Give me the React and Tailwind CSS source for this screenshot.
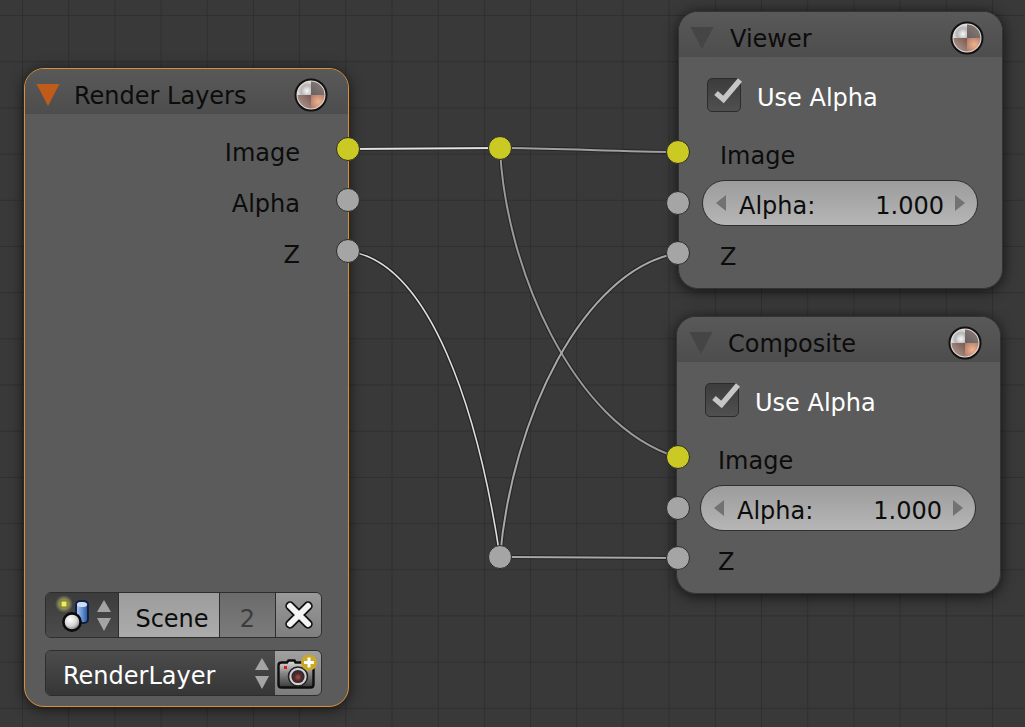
import React from "react";

const FONT = "font-['DejaVu_Sans',sans-serif]";

function Socket({ kind = "gray", className = "" }) {
  const c = kind === "yellow" ? "bg-[#cbc923]" : "bg-[#a5a5a5]";
  return (
    <span
      className={`absolute w-[24px] h-[24px] rounded-full border border-[#2a2a2a] ${c} ${className}`}
    />
  );
}

function Sphere() {
  return (
    <svg width="34" height="34" viewBox="0 0 34 34" className="shrink-0 blur-[0.4px]">
      <defs>
        <radialGradient id="sTL" cx="0.7" cy="0.7" r="0.8">
          <stop offset="0" stopColor="#f6f6f6" />
          <stop offset="0.55" stopColor="#b4b4b4" />
          <stop offset="1" stopColor="#efefef" />
        </radialGradient>
        <linearGradient id="sTR" x1="0" y1="1" x2="1" y2="0">
          <stop offset="0" stopColor="#65605e" />
          <stop offset="1" stopColor="#8f7f7b" />
        </linearGradient>
        <linearGradient id="sBL" x1="1" y1="0" x2="0" y2="1">
          <stop offset="0" stopColor="#77594f" />
          <stop offset="1" stopColor="#b7a29b" />
        </linearGradient>
        <radialGradient id="sBR" cx="0.55" cy="0.5" r="0.7">
          <stop offset="0" stopColor="#efb48c" />
          <stop offset="1" stopColor="#b07a6e" />
        </radialGradient>
      </defs>
      <circle cx="17" cy="17" r="15.5" fill="#e4dcd9" stroke="#111" strokeWidth="2" />
      <path d="M17 17V3.5A13.5 13.5 0 0 0 3.5 17Z" fill="url(#sTL)" />
      <path d="M17 17V3.5A13.5 13.5 0 0 1 30.5 17Z" fill="url(#sTR)" />
      <path d="M17 17H3.5A13.5 13.5 0 0 0 17 30.5Z" fill="url(#sBL)" />
      <path d="M17 17H30.5A13.5 13.5 0 0 1 17 30.5Z" fill="url(#sBR)" />
    </svg>
  );
}

function Triangle({ color }) {
  return (
    <svg width="24" height="24" viewBox="0 0 24 24" className="shrink-0">
      <path d="M0.5 1H23.5L12 23Z" fill={color} />
    </svg>
  );
}

function Header({ title, tri, pl, gap, pr }) {
  return (
    <div
      className={`h-[45px] shrink-0 flex items-center pt-[6px] ${pl} ${pr} rounded-t-[19px] bg-gradient-to-b from-[#595959] to-[#4d4d4d]`}
    >
      <Triangle color={tri} />
      <span className={`${gap} flex-1 text-[24px] leading-none text-[#0c0c0c] pt-[2px]`}>{title}</span>
      <Sphere />
    </div>
  );
}

function Check() {
  return (
    <span className="relative block w-[34px] h-[34px] shrink-0 rounded-[5px] border border-[#2b2b2b] bg-gradient-to-b from-[#3c3c3c] to-[#505050]">
      <svg width="32" height="36" viewBox="0 0 32 36" className="absolute left-[6px] top-[-6px]">
        <path d="M2 20L9.5 26.5L26 7" fill="none" stroke="#c6c6c6" strokeWidth="5.4" strokeLinejoin="miter" />
      </svg>
    </span>
  );
}

function OutputNode({ title, className, socketLeft, pl, gap }) {
  return (
    <div
      className={`absolute w-[325px] h-[278px] flex flex-col rounded-[20px] bg-[#5f5f5f]/90 border border-[#333] shadow-[0_2px_14px_rgba(0,0,0,0.7)] ${className}`}
    >
      <Header title={title} tri="#454545" pl={pl} gap={gap} pr="pr-[18px]" />
      <div className="flex items-start pl-[28px] mt-[21px] h-[35px]">
        <Check />
        <span className="ml-[16px] h-[35px] flex items-center pt-[4px] text-[24px] leading-none text-white">Use Alpha</span>
      </div>
      <div className="pl-[41px] mt-[23px] h-[40px] flex items-center text-[24px] leading-none text-[#0c0c0c]">Image</div>
      <div className="ml-[23px] mt-[4px] w-[276px] h-[46px] rounded-[23px] border border-[#2f2f2f] bg-gradient-to-b from-[#9c9c9c] to-[#b6b6b6] flex items-center text-[24px] leading-none text-[#0c0c0c] pl-[13px] pr-[12px]">
        <svg width="10" height="16" viewBox="0 0 10 16" className="shrink-0"><path d="M10 0V16L0 8Z" fill="#727272" /></svg>
        <span className="ml-[13px] flex-1 pt-[5px]">Alpha:</span>
        <span className="pt-[5px]">1.000</span>
        <svg width="10" height="16" viewBox="0 0 10 16" className="shrink-0 ml-[11px]"><path d="M0 0V16L10 8Z" fill="#727272" /></svg>
      </div>
      <div className="pl-[41px] mt-[11px] h-[40px] flex items-center text-[24px] leading-none text-[#0c0c0c]">Z</div>
      <Socket kind="yellow" className={`${socketLeft} top-[128px]`} />
      <Socket className={`${socketLeft} top-[179px]`} />
      <Socket className={`${socketLeft} top-[229px]`} />
    </div>
  );
}

function SceneIcon() {
  return (
    <svg width="40" height="40" viewBox="0 0 40 40" className="shrink-0">
      <defs>
        <radialGradient id="glow">
          <stop offset="0" stopColor="#f2f06a" stopOpacity="0.9" />
          <stop offset="0.55" stopColor="#c6c46a" stopOpacity="0.55" />
          <stop offset="1" stopColor="#c6c46a" stopOpacity="0" />
        </radialGradient>
        <linearGradient id="cyl" x1="0" y1="0" x2="1" y2="0">
          <stop offset="0" stopColor="#b9cfee" />
          <stop offset="0.55" stopColor="#5f8fd2" />
          <stop offset="1" stopColor="#274f96" />
        </linearGradient>
        <radialGradient id="ball" cx="0.4" cy="0.35" r="0.7">
          <stop offset="0" stopColor="#ffffff" />
          <stop offset="0.55" stopColor="#d4d4d4" />
          <stop offset="1" stopColor="#6a6a6a" />
        </radialGradient>
      </defs>
      <circle cx="10" cy="9" r="9" fill="url(#glow)" />
      <rect x="7" y="6" width="6" height="6" fill="#f0ee60" stroke="#77762a" strokeWidth="1" />
      <rect x="22" y="6" width="12" height="22" rx="4" fill="url(#cyl)" stroke="#12213f" strokeWidth="2" />
      <ellipse cx="28" cy="9.5" rx="5" ry="2.6" fill="#cfdef2" />
      <circle cx="18" cy="27" r="8.6" fill="url(#ball)" stroke="#0b0b0b" strokeWidth="2.6" />
    </svg>
  );
}

function UpDown() {
  return (
    <svg width="14" height="31" viewBox="0 0 14 31" className="shrink-0">
      <path d="M7 0L14 12H0Z" fill="#a4a4a4" />
      <path d="M0 18H14L7 31Z" fill="#a4a4a4" />
    </svg>
  );
}

function CloseIcon() {
  return (
    <svg width="30" height="30" viewBox="0 0 30 30">
      <path d="M6 6L24 24M24 6L6 24" stroke="#111" strokeWidth="9.5" strokeLinecap="round" />
      <path d="M6 6L24 24M24 6L6 24" stroke="#f4f4f4" strokeWidth="6" strokeLinecap="round" />
    </svg>
  );
}

function CameraIcon() {
  return (
    <svg width="44" height="38" viewBox="0 0 44 38">
      <defs>
        <linearGradient id="cam" x1="0" y1="0" x2="0" y2="1">
          <stop offset="0" stopColor="#e0e0e0" />
          <stop offset="0.45" stopColor="#8a8a8a" />
          <stop offset="1" stopColor="#3a3a3a" />
        </linearGradient>
        <radialGradient id="lens" cx="0.5" cy="0.55" r="0.55">
          <stop offset="0" stopColor="#a8553f" />
          <stop offset="0.5" stopColor="#54282a" />
          <stop offset="1" stopColor="#1f2a3c" />
        </radialGradient>
      </defs>
      <path d="M5 8.5h6l1.5-2h6l1 2h15q3 0 3 3v19q0 3-3 3h-29q-3 0-3-3v-19q0-3 3-3Z" fill="url(#cam)" stroke="#0e0e0e" strokeWidth="2.4" />
      <rect x="8" y="12" width="3" height="3" fill="#e01818" />
      <circle cx="22" cy="22.5" r="9.5" fill="#d0d0d0" stroke="#222" strokeWidth="1.6" />
      <circle cx="22" cy="22.5" r="6.6" fill="url(#lens)" />
      <circle cx="33" cy="8.5" r="8" fill="#c9a727" />
      <path d="M33 3.5v10M28 8.5h10" stroke="#fff" strokeWidth="3" />
    </svg>
  );
}

function RenderLayers() {
  return (
    <div className="absolute left-[24px] top-[68px] w-[325px] h-[639px] flex flex-col rounded-[20px] bg-[#5f5f5f]/90 border border-[#d98f33] shadow-[0_2px_14px_rgba(0,0,0,0.65)]">
      <Header title="Render Layers" tri="#c15b1a" pl="pl-[11px]" pr="pr-[20px]" gap="ml-[14px]" />
      <div className="flex flex-col items-end pr-[48px] text-[24px] leading-none text-[#0c0c0c] mt-[13px]">
        <div className="h-[51px] flex items-center">Image</div>
        <div className="h-[51px] flex items-center">Alpha</div>
        <div className="h-[51px] flex items-center">Z</div>
      </div>
      <div className="flex-1" />
      <div className="flex flex-col gap-[12px] px-[20px] pb-[10px] text-[24px] leading-none">
        <div className="flex h-[46px] w-[277px] rounded-[6px] border border-[#2d2d2d] overflow-hidden">
          <div className="w-[72px] shrink-0 flex items-center pl-[8px] gap-[3px] bg-gradient-to-b from-[#3c3c3c] to-[#4c4c4c]">
            <SceneIcon />
            <UpDown />
          </div>
          <div className="w-[101px] shrink-0 flex items-center justify-center pl-[6px] pt-[7px] border-l border-[#2d2d2d] bg-gradient-to-b from-[#9c9c9c] to-[#acacac] text-[#0c0c0c]">Scene</div>
          <div className="w-[56px] shrink-0 flex items-center justify-center pt-[7px] border-l border-[#2d2d2d] bg-gradient-to-b from-[#6b6b6b] to-[#7b7b7b] text-[#3c3c3c]">2</div>
          <div className="flex-1 flex items-center justify-center border-l border-[#2d2d2d] bg-gradient-to-b from-[#9a9a9a] to-[#7f7f7f]">
            <CloseIcon />
          </div>
        </div>
        <div className="flex h-[46px] w-[277px] rounded-[6px] border border-[#2d2d2d] overflow-hidden">
          <div className="w-[229px] shrink-0 flex items-center pl-[17px] pr-[6px] bg-gradient-to-b from-[#4c4c4c] to-[#363636] text-white">
            <span className="flex-1 pt-[6px]">RenderLayer</span>
            <UpDown />
          </div>
          <div className="flex-1 flex items-center justify-center bg-gradient-to-b from-[#a0a0a0] to-[#7d7d7d]">
            <CameraIcon />
          </div>
        </div>
      </div>
      <Socket kind="yellow" className="left-[311px] top-[68px]" />
      <Socket className="left-[311px] top-[119px]" />
      <Socket className="left-[311px] top-[170px]" />
    </div>
  );
}

const wires = [
  ["M348 149 C 400 149, 450 148, 500 148", "#e2e2e2", 2],
  ["M500 148 C 560 148, 620 152, 678 152", "#a0a0a0", 2],
  ["M500 148 C 505 265, 572 425, 677 457", "#9a9a9a", 2],
  ["M348 251 C 430 262, 478 410, 500 557", "#dedede", 1.6],
  ["M500 557 C 512 420, 582 270, 678 253", "#a8a8a8", 2],
  ["M500 557 C 560 557, 620 558, 677 558", "#a8a8a8", 2],
];

function Wires() {
  return (
    <svg width="1025" height="727" viewBox="0 0 1025 727" className="absolute inset-0" fill="none">
      {wires.map(([d]) => (
        <path key={d + "o"} d={d} stroke="#242424" strokeWidth="4" />
      ))}
      {wires.map(([d, c, w]) => (
        <path key={d} d={d} stroke={c} strokeWidth={w} />
      ))}
    </svg>
  );
}

export default function App() {
  return (
    <div
      className={`relative w-[1025px] h-[727px] overflow-hidden bg-[#393939] ${FONT} bg-[linear-gradient(#2f2f2f_1px,transparent_1px),linear-gradient(90deg,#2f2f2f_1px,transparent_1px)] [background-size:46.2px_46.2px] [background-position:22px_15px]`}
    >
      <Wires />
      <RenderLayers />
      <OutputNode title="Viewer" className="left-[678px] top-[11px]" socketLeft="left-[-13px]" pl="pl-[11px]" gap="ml-[16px]" />
      <OutputNode title="Composite" className="left-[676px] top-[316px]" socketLeft="left-[-11px]" pl="pl-[12px]" gap="ml-[15px]" />
      <Socket kind="yellow" className="left-[488px] top-[136px]" />
      <Socket className="left-[488px] top-[545px]" />
    </div>
  );
}
